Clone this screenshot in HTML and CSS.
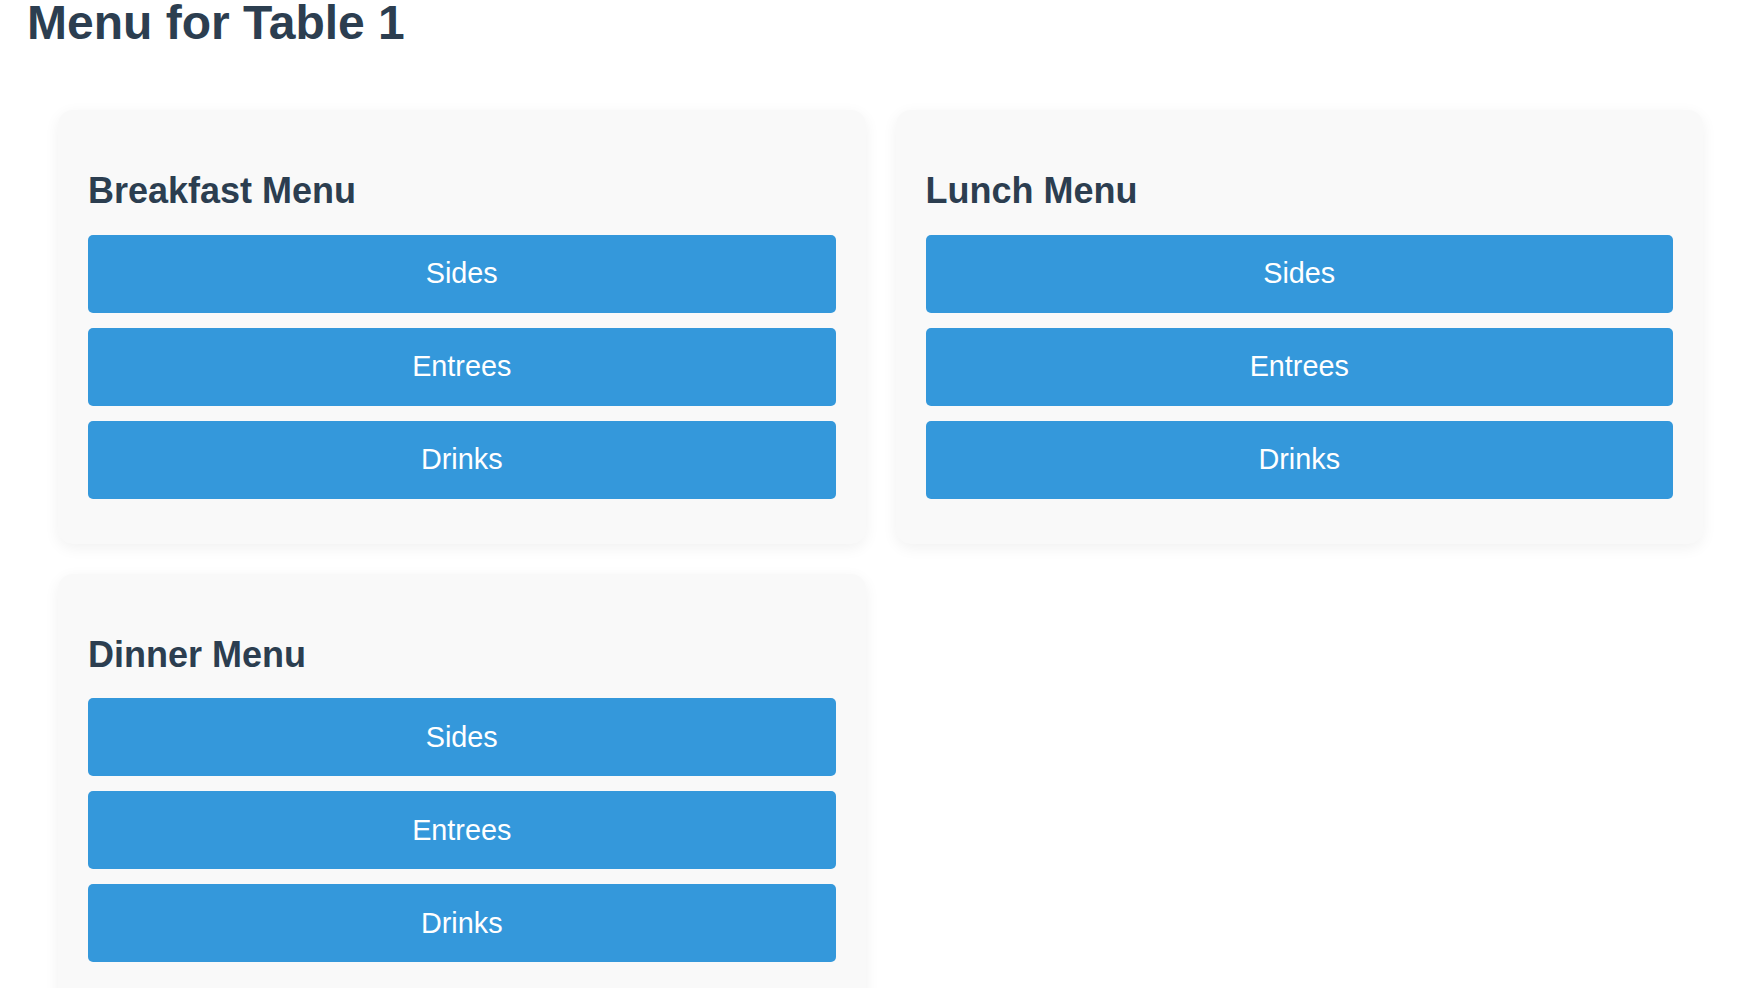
FILE: index.html
```html
<!DOCTYPE html>
<html lang="en">
<head>
<meta charset="utf-8">
<title>Menu for Table 1</title>
<link rel="stylesheet" href="styles.css">
</head>
<body>
<h1 class="page-title">Menu for Table 1</h1>
<div class="menus">
  <section class="menu-card">
    <h2 class="menu-title">Breakfast Menu</h2>
    <button class="menu-btn">Sides</button>
    <button class="menu-btn">Entrees</button>
    <button class="menu-btn">Drinks</button>
  </section>
  <section class="menu-card">
    <h2 class="menu-title">Lunch Menu</h2>
    <button class="menu-btn">Sides</button>
    <button class="menu-btn">Entrees</button>
    <button class="menu-btn">Drinks</button>
  </section>
  <section class="menu-card">
    <h2 class="menu-title">Dinner Menu</h2>
    <button class="menu-btn">Sides</button>
    <button class="menu-btn">Entrees</button>
    <button class="menu-btn">Drinks</button>
  </section>
</div>
</body>
</html>
```
FILE: styles.css
```css
html, body {
  margin: 0;
  padding: 0;
  background: #ffffff;
}
body {
  font-family: "Liberation Sans", Arial, sans-serif;
  color: #2c3e50;
  font-size: 24px;
}
.page-title {
  font-size: 48px;
  font-weight: bold;
  line-height: 48px;
  margin: -1px 0 0 27px;
  color: #2c3e50;
}
.menus {
  display: grid;
  grid-template-columns: 1fr 1fr;
  gap: 30px;
  margin-top: 63px;
  padding: 0 59px 40px 58px;
}
.menu-card {
  background: #f9f9f9;
  border-radius: 15px;
  padding: 30px;
  box-shadow: 0 4px 15px rgba(0, 0, 0, 0.06);
}
.menu-title {
  font-size: 36px;
  font-weight: bold;
  margin: 30px 0 22.6px;
  color: #2c3e50;
}
.menu-btn {
  display: block;
  width: 100%;
  height: 78px;
  margin: 0 0 15px;
  padding: 0;
  border: none;
  border-radius: 5px;
  background: #3498db;
  color: #ffffff;
  font-family: "Liberation Sans", Arial, sans-serif;
  font-size: 28.8px;
  cursor: pointer;
}
```
